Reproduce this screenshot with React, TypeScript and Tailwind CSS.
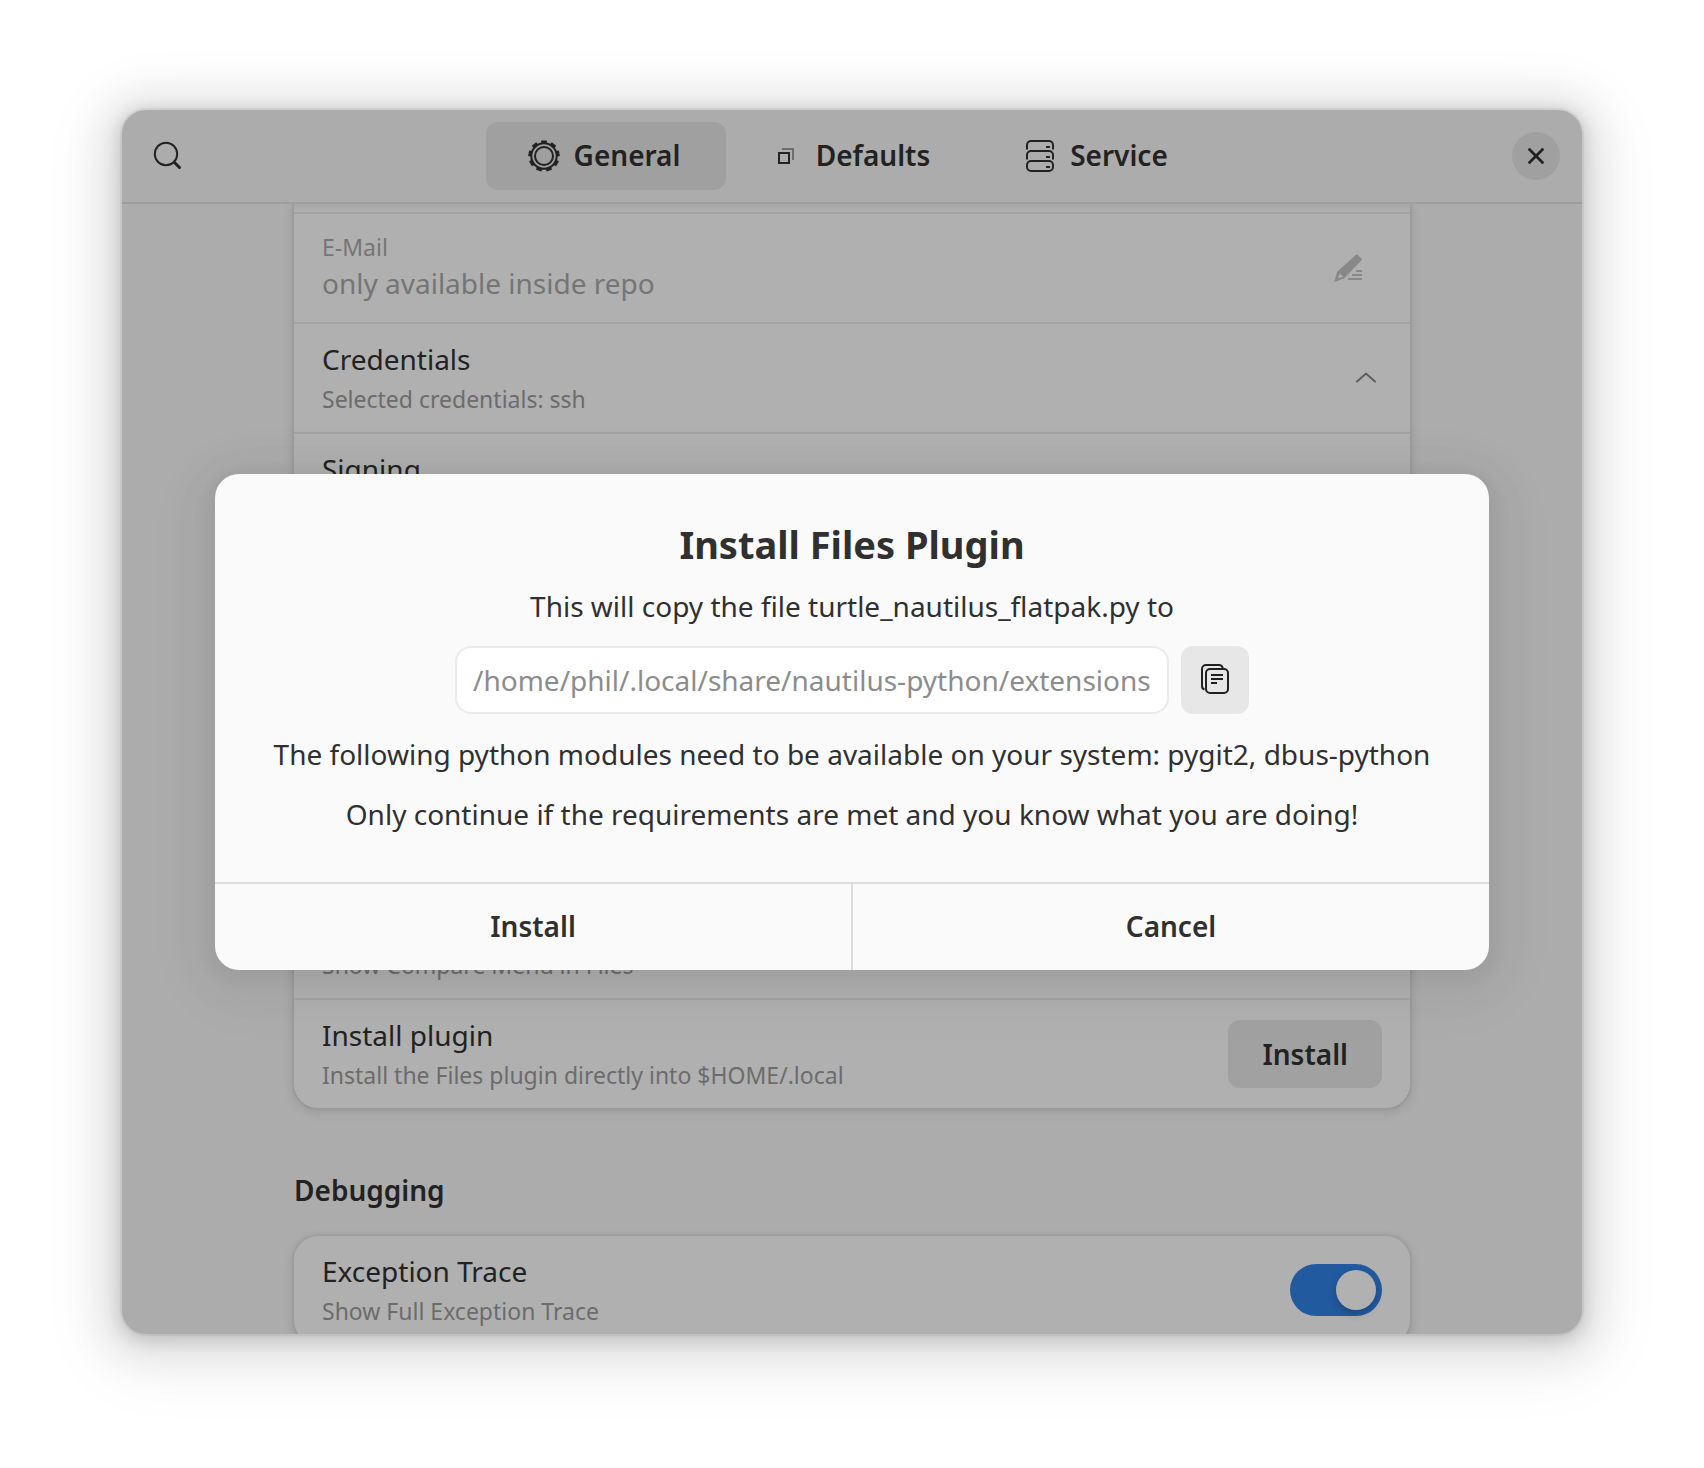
import type { ReactNode } from 'react';

function SearchIcon() {
  return (
    <svg viewBox="0 0 32 32" className="size-8" fill="none" stroke="currentColor" aria-hidden="true">
      <circle cx="14" cy="14" r="11.2" strokeWidth="2" />
      <path d="M22.5 22.5 27.5 27.5" strokeWidth="3" strokeLinecap="round" />
    </svg>
  );
}

const TEETH = [0, 40, 80, 120, 160, 200, 240, 280, 320];

function GearIcon() {
  return (
    <svg viewBox="0 0 32 32" className="size-8" aria-hidden="true">
      <circle cx="16" cy="16" r="12.7" fill="none" stroke="currentColor" strokeWidth="2" />
      <circle cx="16" cy="16" r="9" fill="none" stroke="currentColor" strokeWidth="2" />
      {TEETH.map((a) => (
        <path key={a} d="M13 3.6 13.2 0.4h5.600L19 3.6z" fill="currentColor" transform={`rotate(${a} 16 16)`} />
      ))}
    </svg>
  );
}

function DefaultsIcon() {
  return (
    <svg viewBox="0 0 32 32" className="size-8" fill="none" stroke="currentColor" strokeWidth="2" aria-hidden="true">
      <path d="M12 9h11v11" strokeOpacity="0.45" />
      <rect x="9" y="13" width="10" height="10" />
    </svg>
  );
}

function ServerIcon() {
  return (
    <svg viewBox="0 0 32 32" className="size-8" fill="none" stroke="currentColor" strokeWidth="2" aria-hidden="true">
      <path d="M3 9.5V5a4 4 0 0 1 4-4h18a4 4 0 0 1 4 4v4.5" />
      <path d="M3 19.5V15a4 4 0 0 1 4-4h18a4 4 0 0 1 4 4v4.5" />
      <rect x="3" y="21" width="26" height="10" rx="4" />
      <path d="M22 7h4M22 17h4M22 27h4" />
    </svg>
  );
}

function CloseIcon() {
  return (
    <svg viewBox="0 0 32 32" className="size-8" fill="none" stroke="currentColor" strokeWidth="2.8" strokeLinecap="round" aria-hidden="true">
      <path d="M9.500 9.500l13 13M22.500 9.500l-13 13" />
    </svg>
  );
}

function EditIcon() {
  return (
    <svg viewBox="0 0 32 32" className="size-8" aria-hidden="true">
      <path fill="currentColor" fillRule="evenodd" d="M24.8 2 30.2 7.6 12 26.5 2.2 30 5.2 19.8zM7.8 21.5 6 26.3l5-1.6z" />
      <path d="M24 19h6M20 23h10M16 27h14" stroke="currentColor" strokeWidth="2" />
    </svg>
  );
}

function ChevronUpIcon() {
  return (
    <svg viewBox="0 0 32 32" className="size-8" fill="none" stroke="currentColor" strokeWidth="2" strokeLinecap="round" aria-hidden="true">
      <path d="M7 19.5 16 11.5l9 8" />
    </svg>
  );
}

function CopyIcon() {
  return (
    <svg viewBox="0 0 32 32" className="size-8" fill="none" stroke="currentColor" strokeWidth="2" aria-hidden="true">
      <path d="M5.5 25.5A3.5 3.5 0 0 1 3 22V5a4 4 0 0 1 4-4h13a4 4 0 0 1 3.8 3" />
      <rect x="7" y="5" width="22" height="24" rx="4" />
      <path d="M12 11h12M12 15h12M12 19h6" />
    </svg>
  );
}

function Tab({ icon, label, active }: { icon: ReactNode; label: string; active?: boolean }) {
  return (
    <button
      type="button"
      role="tab"
      aria-selected={!!active}
      className={`flex h-[68px] w-60 items-center justify-center gap-3.5 rounded-xl pr-1 font-semibold ${active ? 'bg-[#a0a0a0]' : ''}`}
    >
      {icon}
      <span className="pb-0.5">{label}</span>
    </button>
  );
}

function Row({ title, subtitle, children, last }: { title?: ReactNode; subtitle?: string; children?: ReactNode; last?: boolean }) {
  return (
    <div className={`flex items-center justify-between px-7 ${last ? 'h-[108px]' : 'h-[110px] border-b-2 border-[#a2a2a2]'}`}>
      <div className="flex flex-col gap-1.5">
        <div className="min-h-9">{title}</div>
        <div className="min-h-8 text-[23px] leading-8 text-[#6c6c6c]">{subtitle}</div>
      </div>
      {children}
    </div>
  );
}

const CARD =
  'bg-[#b0b0b0] shadow-[0_0_0_2px_rgba(0,0,0,0.03),0_2px_6px_2px_rgba(0,0,0,0.07),0_4px_12px_4px_rgba(0,0,0,0.03)]';

export default function App() {
  return (
    <div className="flex h-screen bg-white px-[122px] pt-[110px] pb-[134px] font-['Noto_Sans',sans-serif] text-[28px] leading-9 text-[#222]">
      <main className="relative flex flex-1 flex-col overflow-hidden rounded-3xl bg-[#acacac] shadow-[0_0_0_2px_rgba(0,0,0,0.05),0_4px_16px_4px_rgba(0,0,0,0.13),0_6px_40px_20px_rgba(0,0,0,0.09),0_12px_64px_32px_rgba(0,0,0,0.04)]">
        <header className="grid shrink-0 grid-cols-[1fr_auto_1fr] items-center border-b-2 border-[#9e9e9e] py-3 pr-[22px] pl-[30px]">
          <button type="button" aria-label="Search" className="justify-self-start">
            <SearchIcon />
          </button>
          <nav role="tablist" className="-ml-2 flex gap-1.5">
            <Tab icon={<GearIcon />} label="General" active />
            <Tab icon={<DefaultsIcon />} label="Defaults" />
            <Tab icon={<ServerIcon />} label="Service" />
          </nav>
          <button type="button" aria-label="Close" className="flex size-12 items-center justify-center justify-self-end rounded-full bg-[#a0a0a0]">
            <CloseIcon />
          </button>
        </header>

        <div className="min-h-0 flex-1 overflow-hidden">
          <div className="mx-auto max-w-[1116px]">
            <section className={`rounded-b-3xl ${CARD}`}>
              <div className="h-2.5 border-b-2 border-[#a2a2a2] bg-linear-to-b from-[#a6a6a6] to-[#b0b0b0]" />
              <div className="flex h-[110px] items-center justify-between border-b-2 border-[#a2a2a2] px-7">
                <div className="flex flex-col gap-0.5 pb-1 text-[#757575]">
                  <span className="text-[23px] leading-8">E-Mail</span>
                  <span>only available inside repo</span>
                </div>
                <button type="button" aria-label="Edit E-Mail" className="mr-[18px] text-[#888]">
                  <EditIcon />
                </button>
              </div>
              <Row title="Credentials" subtitle="Selected credentials: ssh">
                <button type="button" aria-label="Collapse credentials" className="text-[#5e5e5e]">
                  <ChevronUpIcon />
                </button>
              </Row>
              <Row title="Signing" last />
            </section>

            <section className={`mt-32 rounded-3xl ${CARD}`}>
              <Row />
              <Row />
              <Row subtitle="Show Compare Menu in Files" />
              <Row title="Install plugin" subtitle="Install the Files plugin directly into $HOME/.local" last>
                <button type="button" className="h-[68px] rounded-xl bg-[#a1a1a1] px-[34px] font-semibold">
                  Install
                </button>
              </Row>
            </section>

            <h2 className="mt-16 mb-7 font-semibold">Debugging</h2>
            <section className={`rounded-3xl ${CARD}`}>
              <Row title={<label htmlFor="trace">Exception Trace</label>} subtitle="Show Full Exception Trace" last>
                <input
                  id="trace"
                  type="checkbox"
                  role="switch"
                  defaultChecked
                  className="flex h-[52px] w-[92px] appearance-none items-center rounded-full bg-[#8e8e8e] p-1.5 before:size-10 before:rounded-full before:bg-[#b1b1b1] before:shadow-[0_4px_8px_rgba(0,0,0,0.2)] checked:justify-end checked:bg-[#225a9f]"
                />
              </Row>
            </section>
          </div>
        </div>

        <div className="absolute inset-0 flex items-center justify-center">
          <div
            role="dialog"
            aria-modal="true"
            aria-labelledby="dialog-title"
            className="flex w-full max-w-[1274px] flex-col overflow-hidden rounded-3xl bg-[#fafafa] text-center text-[#303030] shadow-[0_4px_16px_4px_rgba(0,0,0,0.05),0_6px_40px_20px_rgba(0,0,0,0.03),0_12px_64px_32px_rgba(0,0,0,0.02)]"
          >
            <div className="flex flex-col items-center px-12 pt-[46px] pb-[50px]">
              <h1 id="dialog-title" className="text-[38px] leading-[48px] font-bold">
                Install Files Plugin
              </h1>
              <p className="mt-5">This will copy the file turtle_nautilus_flatpak.py to</p>
              <div className="mt-[22px] flex w-full justify-center gap-3">
                <input
                  type="text"
                  readOnly
                  aria-label="Target folder"
                  value="/home/phil/.local/share/nautilus-python/extensions"
                  className="h-[68px] w-full max-w-[714px] rounded-2xl border-2 border-[#ebebeb] bg-white px-4 text-[#8c8c8c]"
                />
                <button type="button" aria-label="Copy path" className="flex size-[68px] shrink-0 items-center justify-center rounded-xl bg-[#e7e7e7] text-[#222]">
                  <CopyIcon />
                </button>
              </div>
              <p className="mt-[22px]">The following python modules need to be available on your system: pygit2, dbus-python</p>
              <p className="mt-6">Only continue if the requirements are met and you know what you are doing!</p>
            </div>
            <div className="grid grid-cols-[1fr_2px_1fr] border-t-2 border-[#dcdcdc]">
              <button type="button" className="h-[86px] pb-0.5 font-semibold">
                Install
              </button>
              <div className="bg-[#dcdcdc]" />
              <button type="button" className="h-[86px] pb-0.5 font-semibold">
                Cancel
              </button>
            </div>
          </div>
        </div>
      </main>
    </div>
  );
}
